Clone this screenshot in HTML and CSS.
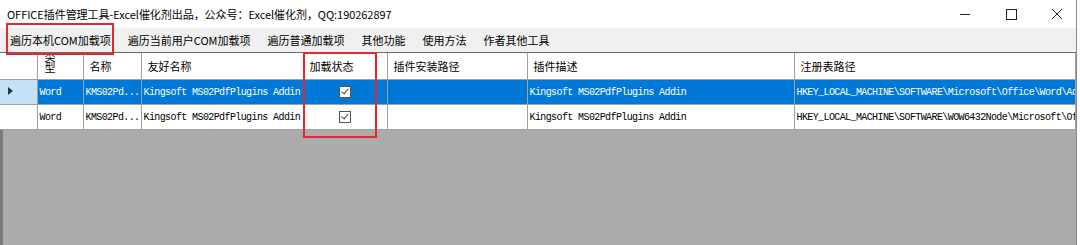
FILE: index.html
```html
<!DOCTYPE html>
<html lang="zh-CN">
<head>
  <meta charset="UTF-8">
  <title>OFFICE插件管理工具</title>
  <link rel="stylesheet" href="styles.css">
</head>
<body>

<div class="ventana">
  <div class="titulo">
    <span class="titulo-texto">OFFICE插件管理工具-Excel催化剂出品，公众号：Excel催化剂，QQ:190262897</span>
    <div class="controles">
      <svg width="46" height="28" viewBox="0 0 46 28"><line x1="18" y1="14.5" x2="28" y2="14.5" stroke="#222" stroke-width="1"/></svg>
      <svg width="46" height="28" viewBox="0 0 46 28"><rect x="18.5" y="9.5" width="10" height="10" fill="none" stroke="#222" stroke-width="1"/></svg>
      <svg width="46" height="28" viewBox="0 0 46 28"><path d="M18 9 L28 19 M28 9 L18 19" stroke="#222" stroke-width="1"/></svg>
    </div>
  </div>

  <div class="menu">
    <span class="item">遍历本机COM加载项</span>
    <span class="item">遍历当前用户COM加载项</span>
    <span class="item">遍历普通加载项</span>
    <span class="item">其他功能</span>
    <span class="item">使用方法</span>
    <span class="item">作者其他工具</span>
  </div>

  <div class="grilla">
    <table>
      <colgroup>
        <col style="width:37px"><col style="width:46px"><col style="width:58px"><col style="width:162px">
        <col style="width:84px"><col style="width:140px"><col style="width:267px"><col style="width:281px">
      </colgroup>
      <thead>
        <tr>
          <th></th>
          <th class="tipo"><div class="tipo-texto">类<br>型</div></th>
          <th>名称</th>
          <th>友好名称</th>
          <th>加载状态</th>
          <th>插件安装路径</th>
          <th>插件描述</th>
          <th>注册表路径</th>
        </tr>
      </thead>
      <tbody>
        <tr class="sel">
          <td class="cab"><span class="flecha"></span></td>
          <td>Word</td>
          <td>KMS02Pd...</td>
          <td>Kingsoft MS02PdfPlugins Addin</td>
          <td class="centro"><span class="check"></span></td>
          <td></td>
          <td>Kingsoft MS02PdfPlugins Addin</td>
          <td>HKEY_LOCAL_MACHINE\SOFTWARE\Microsoft\Office\Word\Addins\KMS02PdfPlugins.Addin</td>
        </tr>
        <tr>
          <td class="cab"></td>
          <td>Word</td>
          <td>KMS02Pd...</td>
          <td>Kingsoft MS02PdfPlugins Addin</td>
          <td class="centro"><span class="check"></span></td>
          <td></td>
          <td>Kingsoft MS02PdfPlugins Addin</td>
          <td>HKEY_LOCAL_MACHINE\SOFTWARE\WOW6432Node\Microsoft\Office\Word\Addins</td>
        </tr>
      </tbody>
    </table>
  </div>

  <div class="marca marca-menu"></div>
  <div class="marca marca-col"></div>
</div>

</body>
</html>
```

FILE: styles.css
```css
body {
  margin: 0;
  background-color: #ffffff;
  font-family: 'Noto Sans CJK SC', 'Noto Sans', sans-serif;
  font-size: 11px;
  color: #000;
}

.ventana {
  position: relative;
  width: 1076px;
  height: 245px;
  border-right: 1px solid #8a8a8a;
  display: flex;
  flex-direction: column;
  overflow: hidden;
}

.titulo {
  height: 28px;
  display: flex;
  align-items: center;
  justify-content: space-between;
  background-color: #ffffff;
}

.titulo-texto {
  padding-left: 7px;
  padding-bottom: 1px;
  letter-spacing: -0.05px;
}

.controles {
  display: flex;
  margin-right: -4px;
}

.controles svg {
  display: block;
}

.menu {
  height: 24px;
  display: flex;
  align-items: center;
  background-color: #f0f0f0;
  padding-left: 2px;
}

.item {
  padding: 0 8px;
  margin-right: 1px;
}

.grilla {
  flex: 1;
  background-color: #ababab;
  border-top: 1px solid #6b6b6b;
  border-left: 3px solid #7a7a7a;
}

table {
  border-collapse: collapse;
  table-layout: fixed;
  width: 1072px;
  margin-left: -3px;
}

th {
  height: 26px;
  padding: 0 0 0 6px;
  background-color: #ffffff;
  font-weight: normal;
  text-align: left;
  border-right: 1px solid #a0a0a0;
  border-bottom: 1px solid #a0a0a0;
  white-space: nowrap;
  overflow: hidden;
}

th.tipo {
  padding: 0 0 0 7px;
  vertical-align: top;
}

.tipo-texto {
  height: 26px;
  overflow: hidden;
  line-height: 11px;
  margin-top: -2px;
}

td {
  height: 24px;
  padding: 0 0 0 2px;
  font-family: 'Liberation Mono', 'DejaVu Sans Mono', monospace;
  font-size: 10px;
  letter-spacing: -0.6px;
  background-color: #ffffff;
  border-right: 1px solid #a0a0a0;
  border-bottom: 1px solid #a0a0a0;
  white-space: nowrap;
  overflow: hidden;
}

tr.sel td {
  background-color: #0078d7;
  color: #ffffff;
}

tr.sel td.cab {
  background-color: #c4e1f6;
}

td.centro {
  text-align: center;
  padding: 0;
}

.flecha {
  display: inline-block;
  margin-left: 6px;
  width: 0;
  height: 0;
  border-top: 4px solid transparent;
  border-bottom: 4px solid transparent;
  border-left: 5px solid #333;
}

.check {
  display: inline-block;
  width: 10px;
  height: 10px;
  border: 1px solid #555;
  background-color: #fff;
  position: relative;
  vertical-align: middle;
}

.check::after {
  content: '';
  position: absolute;
  left: 3px;
  top: 0px;
  width: 3px;
  height: 6px;
  border-right: 1.5px solid #444;
  border-bottom: 1.5px solid #444;
  transform: rotate(40deg);
}

.marca {
  position: absolute;
  border: 2px solid #e8262f;
}

.marca-menu {
  left: 6px;
  top: 23px;
  width: 104px;
  height: 28px;
}

.marca-col {
  left: 303px;
  top: 52px;
  width: 70px;
  height: 82px;
}
```
